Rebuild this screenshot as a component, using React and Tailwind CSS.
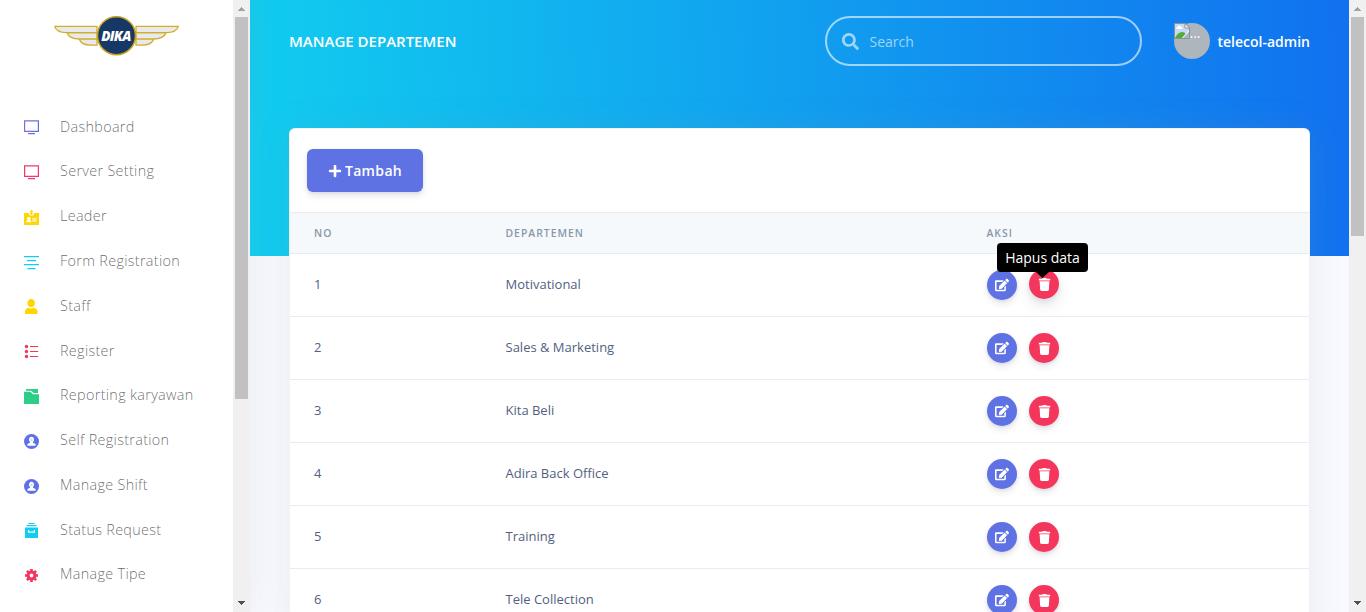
import React from "react";
import { FaSearch, FaPlus, FaEdit, FaTrash } from "react-icons/fa";

function Logo() {
  const wing = (
    <g fill="#e9e9ea" stroke="#d0ae2c" strokeWidth="1.3" strokeLinejoin="round">
      <path d="M26.5 20.500H44V30.200H38Q28 30 26.500 24.500Z" />
      <path d="M14 17.500H44V24H27Q16 24 14 17.500Z" />
      <path d="M1.700 11.400H44V17.600H15Q3.500 18 1.700 11.400Z" />
    </g>
  );
  return (
    <svg width="127" height="42" viewBox="0 0 127 42" className="block">
      {wing}
      <g transform="translate(127 0) scale(-1 1)">{wing}</g>
      <circle cx="63.500" cy="20.700" r="19" fill="#153866" stroke="#c8a11c" strokeWidth="1.500" />
      <text x="63.300" y="26" textAnchor="middle" fill="#fff" fontFamily="Open Sans" fontWeight="800" fontStyle="italic" fontSize="13.500" textLength="30">DIKA</text>
    </svg>
  );
}

function Screen({ id, from, to }) {
  return (
    <>
      <defs>
        <linearGradient id={id}>
          <stop offset="0" stopColor={from} />
          <stop offset="1" stopColor={to} />
        </linearGradient>
      </defs>
      <path fill={`url(#${id})`} fillRule="evenodd" d="M0 .3H15V12H0ZM1.200 1.600V10.700H13.800V1.600ZM4 13H11V14.300H4Z" />
    </>
  );
}

const user = (
  <>
    <circle cx="7.500" cy="7.500" r="7.500" fill="#5e72e4" />
    <path fill="#fff" d="M7.500 2.800a2.700 2.900 0 0 1 1.500 5.200v.8l2.600 1.100v1.800H3.400V9.900L6 8.800V8A2.700 2.900 0 0 1 7.500 2.800Z" />
    <path fill="#5e72e4" d="M7.500 4.200a1.200 1.600 0 0 1 0 3.400 1.200 1.600 0 0 1 0-3.400Z" opacity=".25" />
  </>
);

const icons = {
  dashboard: <Screen id="screen-dashboard" from="#8965e0" to="#5e72e4" />,
  server: <Screen id="screen-server" from="#f5365c" to="#f53680" />,
  badge: (
    <>
      <path fill="#ffd600" d="M0 3H5V4.500Q7.500 7 10 4.500V3H15V15H0Z" />
      <rect x="6.400" y="0" width="2.200" height="5" rx="1" fill="#ffd600" />
      <path fill="#fff" d="M4.800 7.200a1.300 1.300 0 0 1 1 2.400l1.300 1.100v1.500H2.500v-1.500l1.300-1.100a1.300 1.300 0 0 1 1-2.400ZM8.300 8.300H12.600V9.400H8.300ZM8.300 10.300H12.600V11.400H8.300Z" />
    </>
  ),
  align: <path fill="#11cdef" d="M0 1H15V2.200H0ZM3 5H12V6.200H3ZM0 9H15V10.200H0ZM3.500 13H11.500V14.200H3.500Z" />,
  person: <path fill="#ffd600" d="M7.200 0a3.700 3.700 0 0 1 3.700 3.900c0 2.400-1.400 4.300-3.700 4.300S3.500 6.300 3.500 3.900A3.700 3.700 0 0 1 7.200 0ZM1 15v-2.500Q1 10 4.500 8.800q2.700 1.500 5.400 0Q13.500 10 13.500 12.500V15Z" />,
  list: (
    <g fill="#f5365c">
      <circle cx="2.500" cy="2.500" r="1.700" /><circle cx="2.500" cy="7.500" r="1.700" /><circle cx="2.500" cy="12.500" r="1.700" />
      <path d="M6 2H14.200V3.100H6ZM6 7H14.200V8.100H6ZM6 12H14.200V13.100H6Z" />
    </g>
  ),
  folder: <path fill="#2dce89" d="M2 0H14V4H9.700L7.200 1.800H2ZM0 2.800H6.500L9 5.200H15V15H0Z" />,
  user,
  archive: <path fill="#11cdef" d="M4.300 0H10.700V1H4.300ZM2.500 2H12.500V3.200H2.500ZM1 4.500H14V15H1ZM4 7V9.700H11V7H9.800V8.500H5.200V7Z" fillRule="evenodd" />,
  gear: (
    <g>
      {[0, 45, 90, 135].map((a) => (
        <rect key={a} x="6.200" y="1" width="2.600" height="13" fill="#f5365c" transform={`rotate(${a} 7.500 7.500)`} />
      ))}
      <circle cx="7.500" cy="7.500" r="3.400" fill="#fff" stroke="#f5365c" strokeWidth="3" />
    </g>
  ),
};

const menu = [
  ["Dashboard", "dashboard"],
  ["Server Setting", "server"],
  ["Leader", "badge"],
  ["Form Registration", "align"],
  ["Staff", "person"],
  ["Register", "list"],
  ["Reporting karyawan", "folder"],
  ["Self Registration", "user"],
  ["Manage Shift", "user"],
  ["Status Request", "archive"],
  ["Manage Tipe", "gear"],
];

const rows = ["Motivational", "Sales & Marketing", "Kita Beli", "Adira Back Office", "Training", "Tele Collection"];

function Scrollbar({ thumb }) {
  return (
    <div className="flex h-full w-[17px] shrink-0 flex-col items-center bg-[#f0f0f0]">
      <svg width="17" height="17" className="shrink-0" shapeRendering="crispEdges">
        <path d="M8 7h1v1h1v1h1v1h1v1H5v-1h1V9h1V8h1Z" fill="#a3a3a3" />
      </svg>
      <div className={`w-[13px] shrink-0 bg-[#c1c1c1] ${thumb}`} />
      <svg width="17" height="17" className="mt-auto shrink-0" shapeRendering="crispEdges">
        <path d="M5 6h7v1h-1v1h-1v1H9v1H8V9H7V8H6V7H5Z" fill="#505050" />
      </svg>
    </div>
  );
}

function BrokenImage() {
  return (
    <svg width="16" height="16" viewBox="0 0 16 16" className="block shrink-0">
      <path d="M.5.500H11L15.500 5V15.500H.5Z" fill="#c5d8f7" stroke="#909090" />
      <path d="M1 1H10.500V5.500H15V8L8 15H1Z" fill="#c5d8f7" />
      <path d="M2.500 6a2 2 0 0 1 1-2.500 2 2 0 0 1 3.700.5Q9 4.500 8.500 6Z" fill="#fff" />
      <path d="M1 15Q4 9 8 9q3 0 3.500 2L8 15Z" fill="#50ae35" />
      <path d="M11 .5V5h4.500Z" fill="#fff" stroke="#909090" />
      <path d="M8 15 15 7.500V8.500L9 15Z" fill="#fff" />
      <path d="M9 15 15 9V15Z" fill="#adb5bd" />
    </svg>
  );
}

export default function App() {
  return (
    <div className="flex h-[612px] w-full overflow-hidden bg-[#f8f9fe] font-['Open_Sans',sans-serif] text-[#525f7f]">
      <aside className="z-10 flex w-[250px] shrink-0 bg-white shadow-[0_0_32px_rgba(136,152,170,0.15)]">
        <div className="w-[233px] shrink-0">
          <div className="flex h-[104.500px] justify-center pt-[15px]">
            <Logo />
          </div>
          <nav>
            {menu.map(([label, icon]) => (
              <div key={label} className="flex h-[44.780px] items-center pl-6 text-[14.400px] leading-[21.600px]">
                <svg width="15" height="15" viewBox="0 0 15 15" className="mt-[2px] shrink-0">
                  {icons[icon]}
                </svg>
                <span className="mb-[0.800px] ml-[21px] whitespace-nowrap font-light tracking-[0.320px] text-black/60">{label}</span>
              </div>
            ))}
          </nav>
        </div>
        <Scrollbar thumb="h-[382px]" />
      </aside>

      <main className="flex min-w-0 flex-1 flex-col">
        <div className="h-64 shrink-0 bg-[linear-gradient(87deg,#11cdef_0%,#1171ef_100%)] px-[39px]">
          <header className="flex h-[82px] items-center">
            <h1 className="pt-px text-[15px] font-semibold text-white">MANAGE DEPARTEMEN</h1>
            <div className="ml-auto flex h-[50px] w-[317px] items-center rounded-full border-2 border-white/60 pl-[15px] text-white/60">
              <FaSearch size={17} />
              <span className="ml-[11px] text-[14px]">Search</span>
            </div>
            <div className="ml-8 flex items-center">
              <div className="flex size-9 rounded-full bg-[#adb5bd]">
                <BrokenImage />
                <span className="text-[14px] leading-[20px] text-white">...</span>
              </div>
              <span className="ml-2 text-[14px] font-semibold text-white">telecol-admin</span>
            </div>
          </header>
        </div>

        <section className="mx-[39px] -mt-32 h-[520px] rounded-md border border-black/5 bg-white shadow-[0_0_32px_rgba(136,152,170,0.15)]">
          <div className="h-[83px] pl-[17px] pt-5">
            <button className="flex h-[43px] w-[116px] items-center justify-center gap-[3px] rounded-md bg-[#5e72e4] text-[14px] font-semibold tracking-[0.350px] text-white shadow-[0_4px_6px_rgba(50,50,93,0.11),0_1px_3px_rgba(0,0,0,0.08)]">
              <FaPlus size={14} />
              Tambah
            </button>
          </div>
          <div className="grid h-[42px] grid-cols-[191.500px_481px_1fr] items-center border-y border-[#e9ecef] bg-[#f6f9fc] pl-6 pt-px text-[10.400px] font-semibold tracking-[1px] text-[#8898aa]">
            <span>NO</span>
            <span>DEPARTEMEN</span>
            <span>AKSI</span>
          </div>
          {rows.map((name, i) => (
            <div key={name} className="grid h-[63px] grid-cols-[191.500px_481.500px_1fr] items-center border-b border-[#e9ecef] pl-6 text-[13px]">
              <span>{i + 1}</span>
              <span>{name}</span>
              <div className="flex gap-3">
                <button className="flex size-[30px] items-center justify-center rounded-full bg-[#5e72e4] text-white shadow-[0_4px_6px_rgba(50,50,93,0.11),0_1px_3px_rgba(0,0,0,0.08)]">
                  <FaEdit size={14} />
                </button>
                <div className="relative">
                  <button className={`flex size-[30px] items-center justify-center rounded-full bg-[#f5365c] text-white ${i === 0 ? "-translate-y-px shadow-[0_7px_14px_rgba(50,50,93,0.1),0_3px_6px_rgba(0,0,0,0.08)]" : "shadow-[0_4px_6px_rgba(50,50,93,0.11),0_1px_3px_rgba(0,0,0,0.08)]"}`}>
                    <FaTrash size={13} />
                  </button>
                  {i === 0 && (
                    <div className="absolute -left-8 -top-[27px] flex flex-col items-center">
                      <div className="flex h-[29px] w-[91px] items-center justify-center whitespace-nowrap rounded-[4px] bg-black text-[14px] text-white">Hapus data</div>
                      <svg width="13" height="6" className="block">
                        <path d="M0 0H13L6.500 6Z" />
                      </svg>
                    </div>
                  )}
                </div>
              </div>
            </div>
          ))}
        </section>
      </main>
      <Scrollbar thumb="h-[219px]" />
    </div>
  );
}
